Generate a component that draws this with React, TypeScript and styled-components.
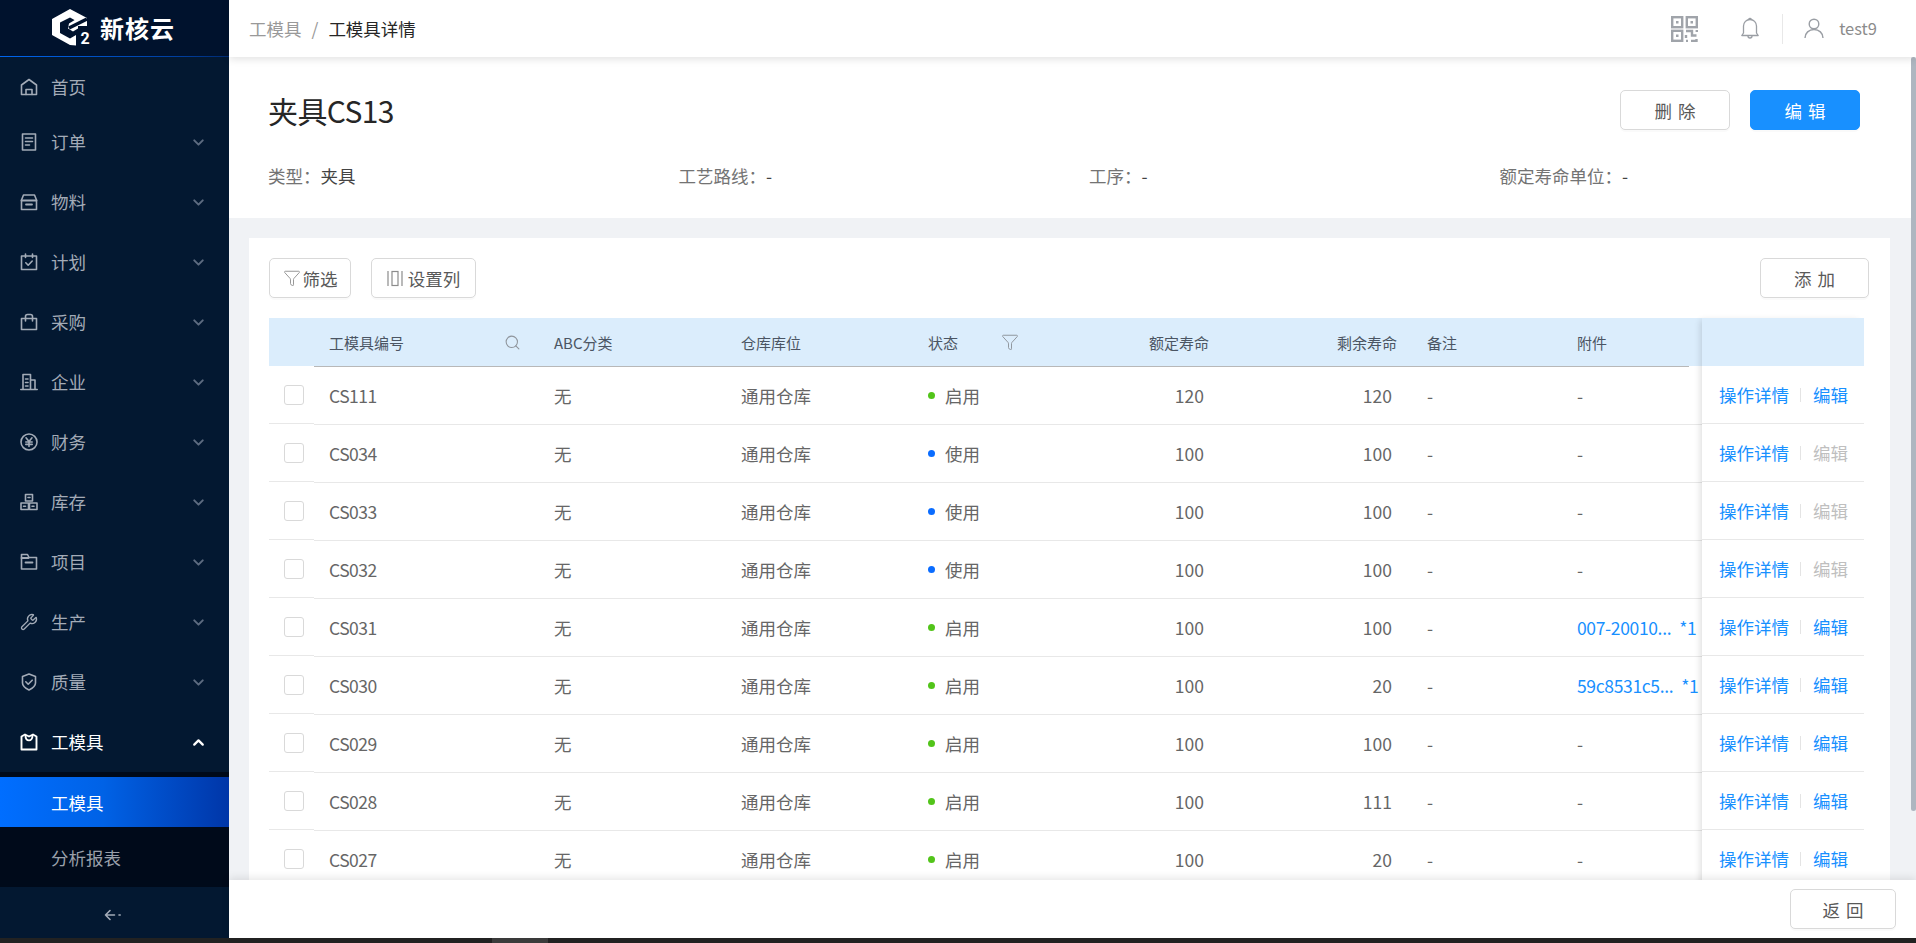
import React from 'react';
import styled, { createGlobalStyle } from 'styled-components';
import { ChevronDown, ChevronUp, Funnel, Search, Wrench } from 'lucide-react';

const Global = createGlobalStyle`
  html, body { margin: 0; padding: 0; height: 100%; overflow: hidden; }
  body { font-family: "Noto Sans CJK SC", "Noto Sans", sans-serif; font-size: 17.5px; color: #595959; }
  * { box-sizing: border-box; }
`;

const Page = styled.div`display: flex; flex-direction: column; height: 943px; width: 1916px; overflow: hidden;`;
const Desk = styled.div`display: flex; height: 938px;`;
const TaskStrip = styled.div`height: 5px; background: #222; padding-left: 492px;`;
const TaskSegment = styled.div`width: 56px; height: 5px; background: #3c3c3c;`;

const Sidebar = styled.aside`width: 229px; flex: none; background: #031831; display: flex; flex-direction: column;`;
const Brand = styled.div`
  height: 57px; background: #00122d; border-bottom: 1px solid; flex: none;
  border-image: linear-gradient(90deg, #0066f0, #003d9c 80%, #002a70) 1;
  display: flex; align-items: center; padding-left: 50px;
`;
const BrandName = styled.span`
  margin-left: 8px; font-size: 24px; font-weight: 700; color: #fff; letter-spacing: 1px; line-height: 1;
`;
const Nav = styled.nav`padding-top: 5px; display: flex; flex-direction: column; flex: none;`;
const NavItem = styled.div<{ $active?: boolean; $first?: boolean }>`
  height: ${p => (p.$first ? 50 : 60)}px; display: flex; align-items: center; padding: 0 22px 0 20px; gap: 13px;
  color: ${p => (p.$active ? '#fff' : '#a3abb7')};
  font-size: 17.5px;
  svg.menu { flex: none; width: 18px; height: 18px; }
`;
const NavLabel = styled.span`flex: 1; line-height: 1;`;
const SubNav = styled.div`background: #000a1a; padding: 5px 0; display: flex; flex-direction: column; gap: 5px; flex: none;`;
const SubItem = styled.div<{ $active?: boolean }>`
  height: 50px; display: flex; align-items: center; padding-left: 51px; font-size: 17.5px;
  color: ${p => (p.$active ? '#fff' : '#9aa0aa')};
  background: ${p => (p.$active ? 'linear-gradient(90deg, #006eff 0%, #0062e6 45%, #0036a8 100%)' : 'transparent')};
`;
const Collapse = styled.div`flex: 1; display: flex; align-items: center; justify-content: center; padding: 5px 4px 0 0; color: #a3abb7;`;

const Main = styled.div`flex: 1; min-width: 0; display: flex; flex-direction: column; background: #f0f2f5;`;
const TopBar = styled.header`
  height: 57px; flex: none; background: #fff; display: flex; align-items: center; padding: 0 39px 0 20px;
  box-shadow: 0 2px 8px rgba(0,0,0,.12); position: relative; z-index: 3;
`;
const Crumbs = styled.div`flex: 1; display: flex; align-items: center; font-size: 17.5px; line-height: 1;`;
const CrumbLink = styled.span`color: #999;`;
const CrumbSep = styled.span`color: #999; margin: 0 10px;`;
const CrumbNow = styled.span`color: #262626;`;
const TopIcons = styled.div`display: flex; align-items: center; color: #9a9ea4;`;
const BellWrap = styled.div`margin-left: 43px; display: flex;`;
const TopDivider = styled.div`width: 1px; height: 30px; background: #e8e8e8; margin: 0 21px 0 23px;`;
const UserName = styled.span`margin-left: 15px; font-size: 16.5px; color: #8c8c8c; line-height: 1;`;

const Body = styled.div`flex: 1; min-height: 0; display: flex;`;
const Scroller = styled.div`flex: 1; min-width: 0; overflow: hidden;`;
const Track = styled.div`width: 5px; flex: none; background: #f0f2f5;`;
const Thumb = styled.div`height: 754px; background: #aeb6c0; border-radius: 3px;`;

const Summary = styled.section`background: #fff; padding: 33px 51px 28px 40px;`;
const SummaryHead = styled.div`display: flex; align-items: center; height: 40px; gap: 20px;`;
const Title = styled.h1`margin: 0 0 0 -1px; flex: 1; font-size: 30px; font-weight: 400; color: #262626; line-height: 40px; letter-spacing: -.6px;`;
const Meta = styled.div`display: grid; grid-template-columns: repeat(4, 410.5px); margin: 32px 0 0 -1px; height: 28px; align-items: center;`;
const MetaItem = styled.div`font-size: 17.5px; color: #737373; line-height: 28px;`;
const MetaValue = styled.span`color: #434343;`;

const Btn = styled.button<{ $primary?: boolean; $w: number; $gap?: number }>`
  width: ${p => p.$w}px; height: 40px; border-radius: 5px; font: inherit; font-size: 17.5px; padding: 0;
  display: inline-flex; align-items: center; justify-content: center; gap: ${p => p.$gap ?? 4}px; flex: none; word-spacing: 2px;
  color: ${p => (p.$primary ? '#fff' : '#595959')};
  background: ${p => (p.$primary ? '#1890ff' : '#fff')};
  border: 1px solid ${p => (p.$primary ? '#1890ff' : '#d9d9d9')};
  box-shadow: 0 2px 0 rgba(0,0,0,.02);
`;

const ListCard = styled.section`background: #fff; margin: 20px 21px 0 20px; padding: 20px 21px 0 20px;`;
const Toolbar = styled.div`display: flex; gap: 20px; height: 40px; margin-bottom: 20px;`;
const ToolSpacer = styled.div`flex: 1;`;

const Table = styled.div`display: flex; margin-right: 5px;`;
const SelectCol = styled.div`width: 45px; flex: none;`;
const SelectHead = styled.div`height: 48px; background: #dbedfc;`;
const SelectCell = styled.div`height: 58px; display: flex; align-items: center; padding: 1px 0 0 15px; border-bottom: 1px solid #e8e8e8;`;
const Check = styled.span`width: 20px; height: 20px; border: 1px solid #d9d9d9; border-radius: 3px; background: #fff;`;

const DataCol = styled.div`flex: 1; min-width: 0;`;
const COLS = '225px 187px 187px 187px 124px 188px 150px 140px';
const HeadRow = styled.div`display: grid; grid-template-columns: ${COLS}; height: 48px; background: #dbedfc;`;
const HeadRule = styled.div`height: 1px; background: #b8b8b8; margin-right: 13px;`;
const HeadCell = styled.div<{ $right?: boolean }>`
  display: flex; align-items: center; font-size: 15px; color: #4b5563; padding: 0 15px;
  justify-content: ${p => (p.$right ? 'flex-end' : 'flex-start')};
`;
const HeadIconGap = styled.span<{ $w: number }>`display: flex; margin-left: ${p => p.$w}px; color: #8f959c;`;
const DataRow = styled.div`display: grid; grid-template-columns: ${COLS}; height: 58px; border-bottom: 1px solid #e8e8e8;`;
const Cell = styled.div<{ $right?: boolean }>`
  display: flex; align-items: center; padding: 0 ${p => (p.$right ? 20 : 15)}px; font-size: 17.5px; color: #666; white-space: nowrap;
  justify-content: ${p => (p.$right ? 'flex-end' : 'flex-start')};
`;
const CodeText = styled.span`letter-spacing: -.5px;`;
const Dot = styled.span<{ $color: string }>`width: 7px; height: 7px; border-radius: 50%; background: ${p => p.$color}; margin-right: 10px;`;
const FileLink = styled.span`color: #1890ff; font-size: 17.5px; display: flex; gap: 8px; letter-spacing: -.35px;`;

const ActionCol = styled.div`width: 162px; flex: none; background: #fff; position: relative; z-index: 1; box-shadow: -4px 0 6px -2px rgba(0,0,0,.12);`;
const ActionHead = styled.div`height: 48px; background: #dbedfc;`;
const ActionCell = styled.div`height: 58px; display: flex; align-items: center; padding-left: 17px; border-bottom: 1px solid #e8e8e8; font-size: 17.5px;`;
const ActionLink = styled.span<{ $off?: boolean }>`color: ${p => (p.$off ? '#bfbfbf' : '#1890ff')};`;
const ActionSep = styled.span`width: 1px; height: 14px; background: #e4e4e4; margin: 0 12px 0 11px;`;

const Footer = styled.footer`
  height: 58px; flex: none; background: #fff; display: flex; align-items: center; justify-content: flex-end; padding-right: 20px;
  box-shadow: 0 -2px 8px rgba(0,0,0,.1); position: relative; z-index: 3;
`;

const Ic: React.FC<{ children: React.ReactNode }> = ({ children }) => (
  <svg className="menu" viewBox="0 0 18 18" fill="none" stroke="currentColor" strokeWidth="1.6" strokeLinejoin="round" strokeLinecap="round">{children}</svg>
);

const icons: Record<string, React.ReactNode> = {
  home: <Ic><path d="M1.500 7 9 1.500 16.500 7v9.500h-15z" /><path d="M6 16.500v-5h6v5" /></Ic>,
  order: <Ic><rect x="2.500" y="1" width="13" height="16" /><path d="M5.500 5h7M5.500 8.500h7M5.500 12h4" /></Ic>,
  goods: <Ic><path d="M1.500 7 3.500 2h11l2 5v9.500h-15z" /><path d="M1.500 7.500h15M6 11.500h6" strokeWidth="1.8" /></Ic>,
  plan: <Ic><rect x="1.500" y="3" width="15" height="13.500" /><path d="M5.500 1v3.500M12.500 1v3.500" /><path d="m5.800 9.800 2.400 2.400 4-4.200" /></Ic>,
  buy: <Ic><rect x="1.500" y="5.500" width="15" height="11" /><path d="M5.500 8V3.500a2 2 0 0 1 2-2h3a2 2 0 0 1 2 2V8" /></Ic>,
  corp: <Ic><path d="M3 16.500V1.500h7.500v15M10.500 7h4.500v9.500M.8 16.500h16.400" /><path d="M5.500 6h2.500M5.500 9.500h2.500M5.500 13h2.500" /></Ic>,
  money: <Ic><circle cx="9" cy="9" r="8" /><path d="M6 4.800 9 8.500l3-3.700M5.800 9h6.400M5.800 11.400h6.400M9 8.500v5" /></Ic>,
  stock: <Ic><rect x="5.500" y="1.500" width="7" height="6.500" /><rect x="1" y="10" width="7.500" height="6.500" /><rect x="9.500" y="10" width="7.500" height="6.500" /><path d="M8 4.500h2M3.500 13.200h2M12 13.200h2" /></Ic>,
  project: <Ic><path d="M1.500 1.500h6l1.500 3h7.500v11.500h-15z" /><path d="M1.500 5h7M5.500 9.500h7" strokeWidth="1.8" /></Ic>,
  shield: <Ic><path d="M9 1 15.500 3.500V10c0 3.500-3.500 5.500-6.500 7-3-1.500-6.500-3.500-6.500-7V3.500z" /><path d="m5.800 8.800 2.400 2.400 4-4" /></Ic>,
  tool: <Ic><path d="M1.500 16.500V3.500L5 1.500l4 2 4-2 3.500 2v13z" strokeWidth="1.900" /><path d="M5.500 2.500c0 6.500 7 6.500 7 0" strokeWidth="1.900" /></Ic>,
};

const menu = [
  ['home', '首页'], ['order', '订单'], ['goods', '物料'], ['plan', '计划'], ['buy', '采购'], ['corp', '企业'],
  ['money', '财务'], ['stock', '库存'], ['project', '项目'], ['wrench', '生产'], ['shield', '质量'],
];

const rows = [
  ['CS111', '启用', '120', '120', ''],
  ['CS034', '使用', '100', '100', ''],
  ['CS033', '使用', '100', '100', ''],
  ['CS032', '使用', '100', '100', ''],
  ['CS031', '启用', '100', '100', '007-20010...'],
  ['CS030', '启用', '100', '20', '59c8531c5...'],
  ['CS029', '启用', '100', '100', ''],
  ['CS028', '启用', '100', '111', ''],
  ['CS027', '启用', '100', '20', ''],
];

const Logo = () => (
  <svg width="42" height="48" viewBox="0 -5 42 48" fill="none">
    <path d="M20 0 37 9v8H28v-4l-8-4.600L10 13.500V24l10 5.500 6-3.500v10.500L20 36 2 26V10z" fill="#fff" />
    <path d="m28 9-9 5.500-1 5 5 3 5-3v-3l9-1" fill="#fff" />
    <path d="M37 10 19 19" stroke="#00122d" strokeWidth="3.500" />
    <text x="30.500" y="35" fontSize="16" fontWeight="700" fill="#fff" fontFamily="Roboto, sans-serif">2</text>
  </svg>
);

const Qr = () => (
  <svg width="27" height="26" viewBox="0 0 27 26" fill="none" stroke="#a0a4aa" strokeWidth="2.400">
    <rect x="1.200" y="1.200" width="10" height="10" /><rect x="15.800" y="1.200" width="10" height="10" /><rect x="1.200" y="14.800" width="10" height="10" />
    <path d="M15 15h6v4.500h4.500M25.800 14v2M15 19v3M20 25h5.500V23M15 25h2" />
    <rect x="5" y="5" width="2.500" height="2.500" fill="#a0a4aa" stroke="none" /><rect x="19.500" y="5" width="2.500" height="2.500" fill="#a0a4aa" stroke="none" /><rect x="5" y="18.500" width="2.500" height="2.500" fill="#a0a4aa" stroke="none" />
  </svg>
);

const BellIcon = () => (
  <svg width="18" height="23" viewBox="0 0 18 23" fill="none" stroke="#9a9ea4" strokeWidth="1.300" strokeLinejoin="round">
    <path d="M.8 18.500h16.400l-1.700-2.500V9a6.500 6.500 0 0 0-13 0v7z" />
    <path d="M7.700 2.200a1.400 1.400 0 0 1 2.600 0M7 19a2 2 0 0 0 4 0" />
  </svg>
);

const UserIcon = () => (
  <svg width="20" height="21" viewBox="0 0 20 21" fill="none" stroke="#9a9ea4" strokeWidth="1.400">
    <circle cx="10" cy="6" r="4.800" />
    <path d="M1 20c0-5 4-8.500 9-8.500s9 3.500 9 8.500" />
  </svg>
);

const ColumnsIcon = () => (
  <svg width="16" height="17" viewBox="0 0 16 17" fill="none" stroke="#8c8c8c" strokeWidth="1.200">
    <path d="M1 1v15M15 1v15" /><rect x="5" y="1.500" width="6" height="14" />
  </svg>
);

const Back = () => (
  <svg width="18" height="12" viewBox="0 0 18 12" fill="none" stroke="#a3abb7" strokeWidth="1.600" strokeLinecap="round" strokeLinejoin="round">
    <path d="M6 1.500 1.500 6 6 10.500M1.500 6h9M15 6h1.200" />
  </svg>
);

export default function App() {
  return (
    <Page>
      <Global />
      <Desk>
        <Sidebar>
          <Brand><Logo /><BrandName>新核云</BrandName></Brand>
          <Nav>
            {menu.map(([k, t], i) => (
              <NavItem key={k} $first={i === 0}>
                {k === 'wrench' ? <Wrench className="menu" strokeWidth={1.800} /> : icons[k]}
                <NavLabel>{t}</NavLabel>
                {i > 0 && <ChevronDown size={17} color="#5d6b80" strokeWidth={2.800} />}
              </NavItem>
            ))}
            <NavItem $active>
              {icons.tool}
              <NavLabel>工模具</NavLabel>
              <ChevronUp size={17} color="#fff" strokeWidth={3.200} />
            </NavItem>
          </Nav>
          <SubNav>
            <SubItem $active>工模具</SubItem>
            <SubItem>分析报表</SubItem>
          </SubNav>
          <Collapse><Back /></Collapse>
        </Sidebar>
        <Main>
          <TopBar>
            <Crumbs>
              <CrumbLink>工模具</CrumbLink>
              <CrumbSep>/</CrumbSep>
              <CrumbNow>工模具详情</CrumbNow>
            </Crumbs>
            <TopIcons>
              <Qr />
              <BellWrap><BellIcon /></BellWrap>
              <TopDivider />
              <UserIcon />
              <UserName>test9</UserName>
            </TopIcons>
          </TopBar>
          <Body>
            <Scroller>
              <Summary>
                <SummaryHead>
                  <Title>夹具CS13</Title>
                  <Btn $w={110}>删 除</Btn>
                  <Btn $w={110} $primary>编 辑</Btn>
                </SummaryHead>
                <Meta>
                  <MetaItem>类型：<MetaValue>夹具</MetaValue></MetaItem>
                  <MetaItem>工艺路线：<MetaValue>-</MetaValue></MetaItem>
                  <MetaItem>工序：<MetaValue>-</MetaValue></MetaItem>
                  <MetaItem>额定寿命单位：<MetaValue>-</MetaValue></MetaItem>
                </Meta>
              </Summary>
              <ListCard>
                <Toolbar>
                  <Btn $w={82} $gap={2}><Funnel size={18} strokeWidth={1.200} color="#8c8c8c" />筛选</Btn>
                  <Btn $w={105} $gap={5}><ColumnsIcon />设置列</Btn>
                  <ToolSpacer />
                  <Btn $w={109}>添 加</Btn>
                </Toolbar>
                <Table>
                  <SelectCol>
                    <SelectHead />
                    {rows.map(r => <SelectCell key={r[0]}><Check /></SelectCell>)}
                  </SelectCol>
                  <DataCol>
                    <HeadRow>
                      <HeadCell>工模具编号<HeadIconGap $w={100}><Search size={17} strokeWidth={1.500} /></HeadIconGap></HeadCell>
                      <HeadCell>ABC分类</HeadCell>
                      <HeadCell>仓库库位</HeadCell>
                      <HeadCell>状态<HeadIconGap $w={43}><Funnel size={18} strokeWidth={1.300} /></HeadIconGap></HeadCell>
                      <HeadCell $right>额定寿命</HeadCell>
                      <HeadCell $right>剩余寿命</HeadCell>
                      <HeadCell>备注</HeadCell>
                      <HeadCell>附件</HeadCell>
                    </HeadRow>
                    <HeadRule />
                    {rows.map(r => (
                      <DataRow key={r[0]}>
                        <Cell><CodeText>{r[0]}</CodeText></Cell>
                        <Cell>无</Cell>
                        <Cell>通用仓库</Cell>
                        <Cell><Dot $color={r[1] === '启用' ? '#52c41a' : '#0a6cff'} />{r[1]}</Cell>
                        <Cell $right>{r[2]}</Cell>
                        <Cell $right>{r[3]}</Cell>
                        <Cell>-</Cell>
                        <Cell>{r[4] ? <FileLink><span>{r[4]}</span><span>*1</span></FileLink> : '-'}</Cell>
                      </DataRow>
                    ))}
                  </DataCol>
                  <ActionCol>
                    <ActionHead />
                    {rows.map(r => (
                      <ActionCell key={r[0]}>
                        <ActionLink>操作详情</ActionLink>
                        <ActionSep />
                        <ActionLink $off={r[1] === '使用'}>编辑</ActionLink>
                      </ActionCell>
                    ))}
                  </ActionCol>
                </Table>
              </ListCard>
            </Scroller>
            <Track><Thumb /></Track>
          </Body>
          <Footer><Btn $w={106}>返 回</Btn></Footer>
        </Main>
      </Desk>
      <TaskStrip><TaskSegment /></TaskStrip>
    </Page>
  );
}
